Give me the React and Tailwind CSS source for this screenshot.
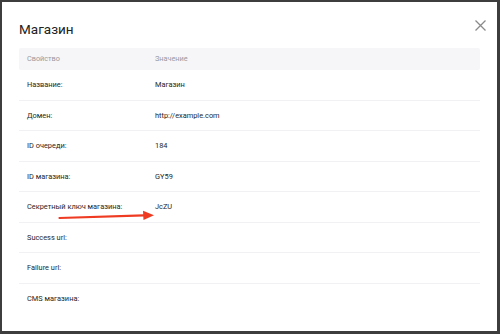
import React from "react";

const rows = [
  ["Название:", "Магазин"],
  ["Домен:", "http://example.com"],
  ["ID очереди:", "184"],
  ["ID магазина:", "GY59"],
  ["Секретный ключ магазина:", "JcZU"],
  ["Success url:", ""],
  ["Failure url:", ""],
  ["CMS магазина:", ""],
];

export default function App() {
  return (
    <div
      className="w-[500px] h-[334px] bg-[#3d3d3d] pl-[2px] pt-[2px] pr-[3px] pb-[3px]"
      style={{ fontFamily: "Roboto, 'Liberation Sans', sans-serif" }}
    >
      <div className="relative h-full bg-white px-[17px]">
        <div className="flex h-[46px] items-start justify-between">
          <h1 className="pt-[17px] text-[13.5px] leading-[20px] text-[#222]">Магазин</h1>
          <button className="mr-[-6px] mt-[18px] text-[#8a8a8a]">
            <svg width="11" height="11" viewBox="0 0 11 11" fill="none" stroke="currentColor" strokeWidth="1.3">
              <path d="M0.5 0.5 L10.5 10.5 M10.5 0.5 L0.5 10.5" />
            </svg>
          </button>
        </div>
        <div className="flex h-[22px] items-center rounded-[2px] bg-[#f6f6f9] text-[7.3px] text-[#9a9a9e]">
          <div className="w-[136px] pl-[8px]">Свойство</div>
          <div>Значение</div>
        </div>
        {rows.map(([k, v], i) => (
          <div
            key={k}
            className={
              "flex h-[30.5px] items-center text-[7.4px] text-[#262626] " +
              (i < rows.length - 1 ? "border-b border-[#f1f1f4]" : "")
            }
          >
            <div className="w-[136px] pl-[8px]">{k}</div>
            <div>{v}</div>
          </div>
        ))}
        <svg
          className="absolute left-[56px] top-[205px]"
          width="100"
          height="16"
          viewBox="0 0 100 16"
        >
          <path d="M1.5 11 L86 8.4" stroke="#ee3b22" strokeWidth="2.2" strokeLinecap="round" />
          <path d="M85 3.8 L96 8.2 L85.5 13 Z" fill="#ee3b22" />
        </svg>
      </div>
    </div>
  );
}
